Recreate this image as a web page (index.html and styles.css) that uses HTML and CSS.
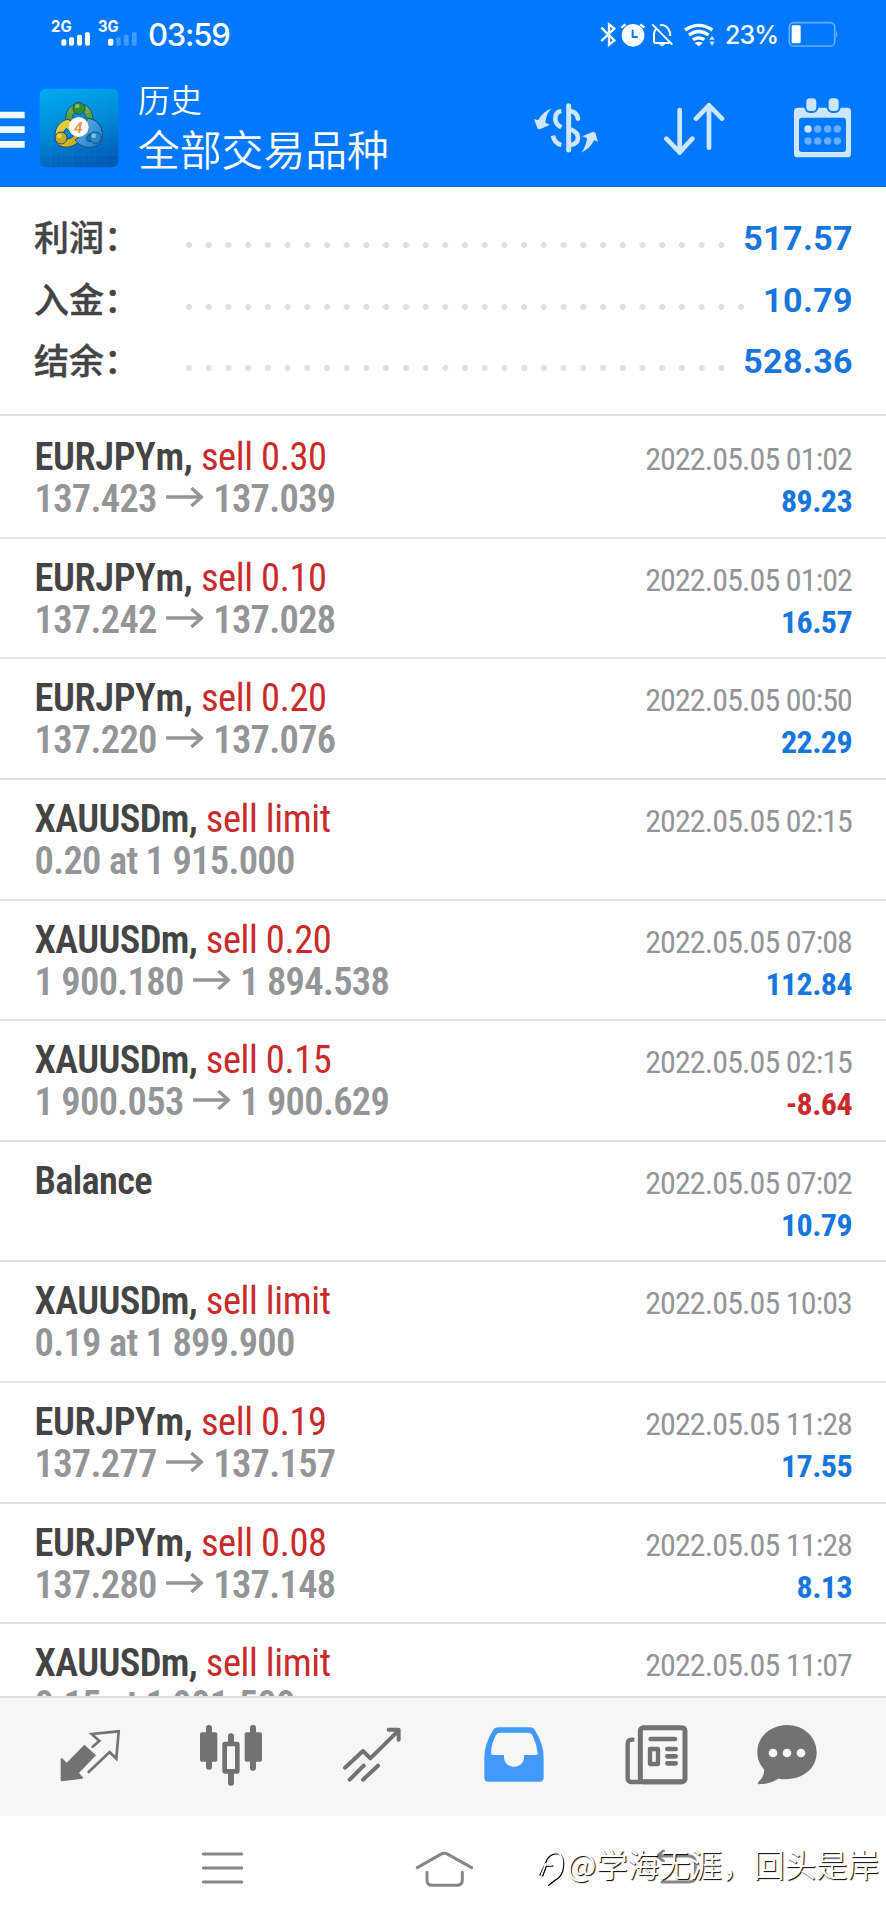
FILE: index.html
```html
<!DOCTYPE html>
<html lang="zh-CN">
<head>
<meta charset="utf-8">
<title>历史</title>
<link rel="stylesheet" href="styles.css">
</head>
<body>
<div class="screen">
  <header class="header">
    <div class="status">
      <svg class="signals" viewBox="150 55 270 90">
        <g fill="#fff">
          <text class="net" x="153" y="98" textLength="62" lengthAdjust="spacingAndGlyphs">2G</text>
          <text class="net" x="294" y="98" textLength="62" lengthAdjust="spacingAndGlyphs">3G</text>
          <rect x="184" y="119" width="15" height="19" rx="5"/>
          <rect x="207" y="113" width="15" height="25" rx="5"/>
          <rect x="231" y="105" width="15" height="33" rx="5"/>
          <rect x="255" y="98" width="15" height="40" rx="5"/>
          <rect x="324" y="117" width="16" height="21" rx="5"/>
        </g>
        <g fill="#409cff">
          <rect x="349" y="113" width="13" height="25" rx="4"/>
          <rect x="372" y="105" width="14" height="33" rx="4"/>
          <rect x="396" y="98" width="14" height="40" rx="4"/>
        </g>
      </svg>
      <span class="clock">03:59</span>
      <svg class="indicators" viewBox="470 60 350 90">
        <g fill="none" stroke="#fff" stroke-width="7">
          <path d="M474 83L513 121L497 134V73L513 86L474 123"/>
          <path d="M534 83L546 73M603 83L591 73"/>
          <path d="M632 128V101Q633 92 638 87M650 77Q656 73 664 77Q680 85 681 108M632 129H678M627 73L687 134" stroke-width="6"/>
        </g>
        <circle cx="569" cy="106" r="34" fill="#fff"/>
        <path d="M568 89V111H583" fill="none" stroke="#0078ff" stroke-width="6"/>
        <path d="M646 133H666Q656 144 646 133Z" fill="#fff"/>
        <g fill="none" stroke="#fff" stroke-width="10">
          <path d="M725 90Q766 62 807 90"/>
          <path d="M737 105Q766 84 796 105"/>
          <path d="M749 119Q766 108 783 119"/>
        </g>
        <path d="M754 129Q766 122 778 129L766 139Z" fill="#fff"/>
        <path d="M798 119L806 108L814 119ZM798 125H814L806 137Z" fill="#d5eaff"/>
      </svg>
      <span class="percent">23%</span>
      <svg class="battery" viewBox="1030 60 156 90">
        <rect x="1037" y="68" width="136" height="70" rx="13" fill="none" stroke="#65b0ff" stroke-width="5"/>
        <rect x="1044" y="76" width="27" height="54" rx="4" fill="#fff"/>
        <path d="M1177 93Q1185 103 1177 114Z" fill="#65b0ff"/>
      </svg>
    </div>
    <div class="toolbar">
      <svg class="menu" viewBox="0 330 75 120"><path d="M0 345H74M0 389H74M0 433H74" stroke="#f0fbff" stroke-width="20"/></svg>
      <svg class="logo" viewBox="0 0 240 240">
        <defs>
          <linearGradient id="sky" x1="0.35" y1="0" x2="0.65" y2="1"><stop offset="0" stop-color="#00a7ef"/><stop offset=".5" stop-color="#0088d5"/><stop offset="1" stop-color="#0059b6"/></linearGradient>
          <linearGradient id="green" x1="0" y1="0" x2="0" y2="1"><stop offset="0" stop-color="#86b455"/><stop offset="1" stop-color="#2e8b2e"/></linearGradient>
          <linearGradient id="gold" x1="0" y1="0" x2="1" y2="1"><stop offset="0" stop-color="#eadb55"/><stop offset="1" stop-color="#c5a013"/></linearGradient>
          <linearGradient id="blue" x1="0" y1="0" x2="1" y2="1"><stop offset="0" stop-color="#62b5e8"/><stop offset="1" stop-color="#1f78c4"/></linearGradient>
        </defs>
        <rect x="2" y="2" width="236" height="236" rx="18" fill="url(#sky)"/>
        <path d="M35 4V236M68 4V236M101 4V236M134 4V236M167 4V236M200 4V236M4 35H236M4 68H236M4 101H236M4 134H236M4 167H236M4 200H236" stroke="#35a6ed" stroke-opacity=".2" stroke-width="2"/>
        <g stroke="#164f79" stroke-width="3">
          <path fill-rule="evenodd" d="M80 91C80 32 162 32 162 94L151 120H92ZM101 88Q101 70 120 70Q141 71 141 91Z" fill="url(#green)"/>
          <path fill-rule="evenodd" d="M88 94C52 98 38 144 55 168C77 187 115 175 126 151L107 107ZM82 121Q66 138 75 151Q91 158 106 142Z" fill="url(#gold)"/>
          <path fill-rule="evenodd" d="M145 91C187 94 199 139 184 165C163 187 125 180 108 156L133 137ZM151 137Q136 153 146 160Q163 163 170 146Z" fill="url(#blue)"/>
          <circle cx="120" cy="61" r="18" fill="#2f8d32"/>
          <circle cx="66" cy="150" r="18" fill="#c9ab1d"/>
          <circle cx="169" cy="149" r="17" fill="#2c88cd"/>
        </g>
        <circle cx="115" cy="54" r="7" fill="#7fbd69"/><circle cx="61" cy="144" r="7" fill="#e7d45b"/><circle cx="164" cy="143" r="7" fill="#79c1ed"/>
        <circle cx="119" cy="117" r="30" fill="#fbfaf8"/>
        <text class="logo-four" x="118" y="135" text-anchor="middle">4</text>
      </svg>
      <div class="titles">
        <div class="subtitle">历史</div>
        <div class="title">全部交易品种</div>
      </div>
      <svg class="act-currency" viewBox="270 290 201 180">
        <g fill="none" stroke="#cce6ff" stroke-width="14">
          <path d="M377 313V446" stroke-linecap="round" stroke-width="15"/>
          <path d="M355 329Q337 332 337 352Q337 368 355 378M330 403Q334 426 355 431"/>
          <path d="M383 329Q402 333 405 352" stroke-linecap="round"/>
          <path d="M383 384Q405 393 405 409Q404 429 383 431"/>
        </g>
        <path d="M273 353L285 357Q300 331 326 321Q309 337 307 364L321 370L291 384L284 382Z" fill="#cce6ff"/>
        <path d="M465 422L454 416Q440 443 414 454Q429 438 432 410L418 405L450 391L457 394Z" fill="#cce6ff"/>
      </svg>
      <svg class="act-sort" viewBox="660 290 186 180">
        <path d="M710 326V454M670 412L710 453L748 412M798 439V313M759 352L798 312L837 352" fill="none" stroke="#cce6ff" stroke-width="14" stroke-linecap="round" stroke-linejoin="round"/>
      </svg>
      <svg class="act-calendar" viewBox="1050 290 177 180">
        <path fill-rule="evenodd" d="M1064 319H1213Q1224 319 1224 330V457Q1224 468 1213 468H1064Q1053 468 1053 457V330Q1053 319 1064 319ZM1077 349Q1068 349 1068 358V443Q1068 452 1077 452H1200Q1209 452 1209 443V358Q1209 349 1200 349Z" fill="#cce6ff"/>
        <g fill="#cce6ff" stroke="#0078ff" stroke-width="6"><rect x="1087" y="288" width="36" height="44" rx="14"/><rect x="1154" y="288" width="36" height="44" rx="14"/></g>
        <circle cx="1095" cy="383" r="11" fill="#cce6ff"/>
        <g fill="#66afff"><circle cx="1124" cy="383" r="11"/><circle cx="1154" cy="383" r="11"/><circle cx="1183" cy="383" r="11"/><circle cx="1095" cy="419" r="11"/><circle cx="1124" cy="419" r="11"/><circle cx="1154" cy="419" r="11"/><circle cx="1183" cy="419" r="11"/></g>
      </svg>
    </div>
  </header>

  <section class="summary">
    <div class="sum-row"><span class="sum-label">利润：</span><span class="dots"></span><span class="sum-value">517.57</span></div>
    <div class="sum-row"><span class="sum-label">入金：</span><span class="dots"></span><span class="sum-value">10.79</span></div>
    <div class="sum-row"><span class="sum-label">结余：</span><span class="dots"></span><span class="sum-value">528.36</span></div>
  </section>

  <svg class="defs"><symbol id="arrow" viewBox="0 0 112 60"><path d="M0 30H106M76 3L106 30L76 57" fill="none" stroke="#949597" stroke-width="10"/></symbol></svg>

  <main class="list">
    <div class="row"><div class="line"><div><b class="sym eur">EURJPYm,</b> <span class="side">sell 0.30</span></div><span class="date">2022.05.05 01:02</span></div><div class="line"><span class="price">137.423<svg class="arrow"><use href="#arrow"/></svg>137.039</span><span class="profit">89.23</span></div></div>
    <div class="row"><div class="line"><div><b class="sym eur">EURJPYm,</b> <span class="side">sell 0.10</span></div><span class="date">2022.05.05 01:02</span></div><div class="line"><span class="price">137.242<svg class="arrow"><use href="#arrow"/></svg>137.028</span><span class="profit">16.57</span></div></div>
    <div class="row"><div class="line"><div><b class="sym eur">EURJPYm,</b> <span class="side">sell 0.20</span></div><span class="date">2022.05.05 00:50</span></div><div class="line"><span class="price">137.220<svg class="arrow"><use href="#arrow"/></svg>137.076</span><span class="profit">22.29</span></div></div>
    <div class="row"><div class="line"><div><b class="sym">XAUUSDm,</b> <span class="side">sell limit</span></div><span class="date">2022.05.05 02:15</span></div><div class="line"><span class="price">0.20 at 1 915.000</span></div></div>
    <div class="row"><div class="line"><div><b class="sym">XAUUSDm,</b> <span class="side">sell 0.20</span></div><span class="date">2022.05.05 07:08</span></div><div class="line"><span class="price">1 900.180<svg class="arrow"><use href="#arrow"/></svg>1 894.538</span><span class="profit">112.84</span></div></div>
    <div class="row"><div class="line"><div><b class="sym">XAUUSDm,</b> <span class="side">sell 0.15</span></div><span class="date">2022.05.05 02:15</span></div><div class="line"><span class="price">1 900.053<svg class="arrow"><use href="#arrow"/></svg>1 900.629</span><span class="profit loss">-8.64</span></div></div>
    <div class="row"><div class="line"><div><b class="sym">Balance</b></div><span class="date">2022.05.05 07:02</span></div><div class="line only-profit"><span class="profit">10.79</span></div></div>
    <div class="row"><div class="line"><div><b class="sym">XAUUSDm,</b> <span class="side">sell limit</span></div><span class="date">2022.05.05 10:03</span></div><div class="line"><span class="price">0.19 at 1 899.900</span></div></div>
    <div class="row"><div class="line"><div><b class="sym eur">EURJPYm,</b> <span class="side">sell 0.19</span></div><span class="date">2022.05.05 11:28</span></div><div class="line"><span class="price">137.277<svg class="arrow"><use href="#arrow"/></svg>137.157</span><span class="profit">17.55</span></div></div>
    <div class="row"><div class="line"><div><b class="sym eur">EURJPYm,</b> <span class="side">sell 0.08</span></div><span class="date">2022.05.05 11:28</span></div><div class="line"><span class="price">137.280<svg class="arrow"><use href="#arrow"/></svg>137.148</span><span class="profit">8.13</span></div></div>
    <div class="row"><div class="line"><div><b class="sym">XAUUSDm,</b> <span class="side">sell limit</span></div><span class="date">2022.05.05 11:07</span></div><div class="line"><span class="price">0.15 at 1 901.500</span></div></div>
  </main>

  <nav class="tabs">
    <svg width="61" height="63" viewBox="180 370 183 189">
      <path d="M253 435L288 467L237 520L250 534L247 537L186 545Q182 544 182 540V477L186 475L200 489Z" fill="#727272"/>
      <path d="M278 441L298 424L275 403L356 395L349 477L329 457L266 517" fill="none" stroke="#727272" stroke-width="8" stroke-linecap="round"/>
    </svg>
    <svg width="64" height="63" viewBox="597 370 192 189">
      <g fill="#727272"><rect x="600" y="398" width="52" height="88" rx="6"/><rect x="618" y="376" width="18" height="134" rx="8"/><rect x="734" y="398" width="52" height="88" rx="6"/><rect x="750" y="376" width="18" height="137" rx="8"/><rect x="684" y="401" width="18" height="32" rx="8"/><rect x="684" y="514" width="18" height="44" rx="8"/></g>
      <rect x="674" y="433" width="38" height="82" fill="#f6f6f6" stroke="#727272" stroke-width="14" stroke-linejoin="round"/>
    </svg>
    <svg width="60" height="63" viewBox="1026 370 180 189">
      <path d="M1035 504L1089 454L1111 476L1196 392M1049 540L1091 498M1089 540L1134 498M1166 390H1196V420" fill="none" stroke="#727272" stroke-width="12" stroke-linecap="round" stroke-linejoin="round"/>
    </svg>
    <svg width="62" height="63" viewBox="120 370 186 189">
      <path fill-rule="evenodd" d="M166 383H260Q271 383 277 393Q302 433 302 473V534Q302 546 290 546H136Q124 546 124 534V473Q124 433 149 393Q155 383 166 383ZM174 399Q163 399 159 406Q145 432 144 460Q144 466 150 466H183V476C187 510 239 510 243 476V466H278Q285 466 284 460Q281 432 268 406Q264 399 253 399Z" fill="#4299fc"/>
    </svg>
    <svg width="65" height="63" viewBox="543 370 195 189">
      <g fill="none" stroke="#727272"><rect x="592" y="384" width="134" height="162" rx="9" stroke-width="15"/><path d="M574 420H566Q554 420 554 432V536Q554 547 566 547H716" stroke-width="13"/><path d="M623 418H696" stroke-width="14" stroke-linecap="round"/><rect x="621" y="448" width="24" height="45" stroke-width="13" stroke-linejoin="round"/><path d="M673 448H698M673 470H698M673 491H698" stroke-width="14" stroke-linecap="round"/></g>
    </svg>
    <svg width="62" height="63" viewBox="936 370 186 189">
      <path d="M1029 376C1079 376 1118 412 1118 458C1118 509 1072 547 1003 537Q976 553 945 554Q939 553 943 547Q960 532 961 510C948 496 940 479 940 458C940 412 979 376 1029 376Z" fill="#727272"/>
      <g fill="#f6f6f6"><circle cx="987" cy="460" r="13"/><circle cx="1029" cy="460" r="13"/><circle cx="1071" cy="460" r="13"/></g>
    </svg>
  </nav>

  <footer class="sysnav">
    <svg width="45" height="38" viewBox="600 748 135 114"><path d="M610 763H725M610 805H725M610 847H725" stroke="#878787" stroke-width="9" stroke-linecap="round"/></svg>
    <svg width="60" height="38" viewBox="-3 21 180 114"><path d="M10 77L80 37Q91 31 102 37L173 77M39 91V114Q39 130 55 130H129Q145 130 145 114V91" fill="none" stroke="#878787" stroke-width="9" stroke-linecap="round"/></svg>
    <svg class="back" width="45" height="38" viewBox="635 748 135 114"><path d="M663 754L644 769L663 784M645 769H738Q759 769 759 788V828Q759 847 738 847H659" fill="none" stroke="#878787" stroke-width="9" stroke-linecap="round"/></svg>
    <div class="watermark"><svg width="30" height="38" viewBox="0 0 90 114"><path d="M8 79L30 31Q43 11 67 15Q82 24 79 54Q76 83 53 94L33 110M23 51H49M30 45L16 82" fill="none" stroke="#fff" stroke-width="5"/></svg><span>@学海无涯，回头是岸</span></div>
  </footer>
</div>
</body>
</html>
```
FILE: styles.css
```css
* { box-sizing: border-box; }
body { margin: 0; background: #fff; font-family: Roboto, "Noto Sans CJK SC", sans-serif; }
svg { display: block; flex: none; }
.screen { width: 886px; height: 1920px; display: flex; flex-direction: column; overflow: hidden; }
.defs { width: 0; height: 0; }

.header { height: 187px; flex: none; background: #0078ff; border-bottom: 1px solid #1b6bbf; color: #fff; }
.status { height: 70px; display: flex; align-items: center; padding-left: 50px; }
.signals { width: 90px; height: 30px; margin-top: -4px; overflow: visible; }
.net { font: 700 48px Inter, sans-serif; }
.clock { width: 84px; margin-left: 8px; font: 500 31px/70px Inter, sans-serif; letter-spacing: -1.2px; }
.indicators { width: 116.7px; height: 30px; margin-left: 367.7px; }
.percent { width: 56px; margin-left: 8.5px; font: 500 25px/70px Inter, sans-serif; letter-spacing: -.8px; }
.battery { width: 52px; height: 30px; margin-left: 6.5px; }

.toolbar { height: 116px; display: flex; align-items: center; }
.menu { width: 25px; height: 40px; margin-top: 4px; }
.logo { width: 80px; height: 80px; margin: -1px 0 0 14px; }
.logo-four { font: italic 600 46px Roboto, sans-serif; fill: #e99449; }
.titles { width: 414px; margin-top: -5px; padding-left: 19px; font-family: "Noto Sans CJK SC", sans-serif; font-weight: 350; white-space: nowrap; }
.subtitle { font-size: 32px; line-height: 45px; }
.title { font-size: 41.8px; line-height: 55px; }
.act-currency { width: 67px; height: 60px; }
.act-sort { width: 62px; height: 60px; margin-left: 63px; }
.act-calendar { width: 59px; height: 60px; margin-left: 68px; }

.summary { height: 229px; flex: none; padding: 20px 33px 0 34px; border-bottom: 2px solid #e0e0e0; }
.sum-row { height: 61.5px; display: flex; align-items: center; }
.sum-label { width: 145px; margin-top: -4px; font: 500 35px/61px "Noto Sans CJK SC", sans-serif; color: #444; -webkit-text-stroke: .4px #444; white-space: nowrap; }
.dots { flex: 1; height: 8px; margin: 15px 10px 0 0; background: radial-gradient(circle at 10px 4px, #dfdfdf 2.6px, transparent 3.4px) 0 0 / 19.73px 8px repeat-x; }
.sum-value { margin-top: 2px; font-size: 34px; font-weight: 700; letter-spacing: .4px; line-height: 61px; color: #1776dd; }

.list { flex: 1; min-height: 0; overflow: hidden; padding-top: 2.3px; }
.row { height: 120.6px; border-bottom: 2px solid #e2e2e2; padding: 16px 34px 0 34.5px; font-family: "Roboto Condensed", Roboto, sans-serif; font-stretch: 75%; }
.line { height: 42px; display: flex; justify-content: space-between; align-items: baseline; line-height: 46px; white-space: nowrap; }
.only-profit { justify-content: flex-end; padding-top: 2px; }
.sym { font-size: 38.5px; font-weight: 600; letter-spacing: -.7px; font-kerning: none; color: #444; }
.eur { letter-spacing: -.4px; }
.side { margin-left: 5px; font-size: 38.5px; letter-spacing: -.4px; color: #c92a2a; }
.price { font-size: 38.5px; font-weight: 650; letter-spacing: -.7px; color: #949597; }
.arrow { display: inline-block; width: 37.5px; height: 20px; margin: 0 9.5px 0 9.5px; vertical-align: 5px; }
.date { font-size: 32px; letter-spacing: -.9px; color: #949597; }
.profit { font-size: 32px; font-weight: 700; letter-spacing: -.6px; color: #1776dd; }
.loss { color: #c92a2a; }

.tabs { height: 120px; flex: none; display: grid; grid-template-columns: 141px 140px 142px 142px 143px 117px; justify-items: center; padding: 25px 0 0 20px; background: #f6f6f6; border-top: 2px solid #dedede; }
.sysnav { position: relative; height: 104px; flex: none; display: flex; gap: 168px; padding: 33px 0 0 200px; }
.back { margin-left: 13px; }
.watermark { position: absolute; left: 536px; top: 26px; display: flex; font: 350 31.4px/44px "Noto Sans CJK SC", sans-serif; color: #fff; white-space: nowrap; text-shadow: 1px 1px 1px #000; }
.watermark svg { margin: 6px 1px 0 0; filter: drop-shadow(1px 1px .5px #000); }
```
